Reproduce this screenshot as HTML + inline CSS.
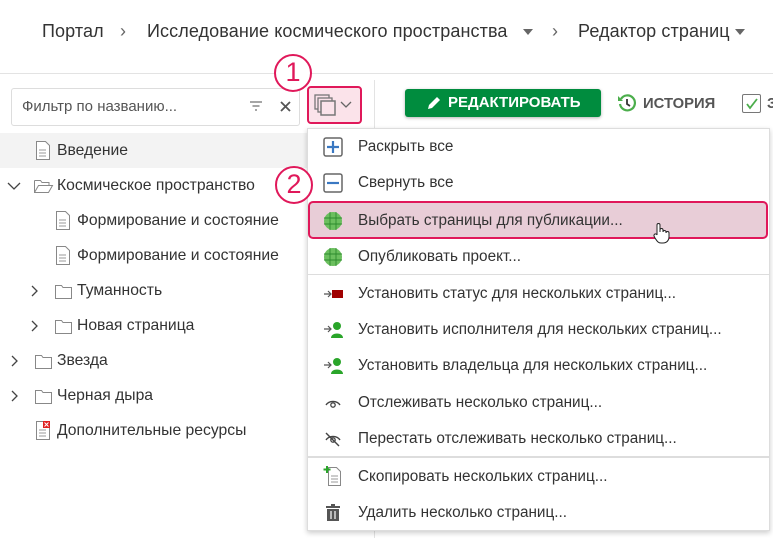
<!DOCTYPE html>
<html><head><meta charset="utf-8"><style>
*{margin:0;padding:0;box-sizing:border-box}
body{width:773px;height:538px;background:#fff;font-family:"Liberation Sans",sans-serif;color:#333;position:relative;overflow:hidden}
.a{position:absolute}
.bc{top:21px;font-size:18px;color:#333;letter-spacing:0.1px;white-space:nowrap}
.tri{display:inline-block;width:0;height:0;border-left:5px solid transparent;border-right:5px solid transparent;border-top:6px solid #666;vertical-align:middle}
.row{position:absolute;left:0;width:307px;height:35px;font-size:15.7px;line-height:35px;white-space:nowrap}
.mi{position:absolute;left:308px;width:461px;height:36px;font-size:15.3px;line-height:37px;color:#333;white-space:nowrap}
.mi span{position:absolute;left:50px}
.mi svg{position:absolute;left:15px;top:9px}
.circ{position:absolute;width:38px;height:38px;border:2.5px solid #e0185a;border-radius:50%;background:#fff;color:#e0185a;font-size:27px;line-height:33px;text-align:center}
</style></head><body>
<div class="a bc" style="left:42px">Портал</div>
<div class="a bc" style="left:120px;color:#666">›</div>
<div class="a bc" style="left:147px">Исследование космического пространства <span class="tri" style="margin-left:10px"></span></div>
<div class="a bc" style="left:552px;color:#666">›</div>
<div class="a bc" style="left:578px">Редактор страниц <span class="tri"></span></div>
<div class="a" style="left:0;top:73px;width:773px;height:1px;background:#e3e3e3"></div>
<div class="a" style="left:374px;top:80px;width:1px;height:458px;background:#e3e3e3"></div>

<div class="a" style="left:11px;top:88px;width:289px;height:38px;border:1px solid #ddd;border-radius:3px"></div>
<div class="a" style="left:22px;top:98px;font-size:15px;color:#555">Фильтр по названию...</div>
<svg class="a" style="left:249px;top:100px" width="14" height="12"><path d="M1 2h12M3.5 6h7M6 10h2" stroke="#888" stroke-width="1.6"/></svg>
<svg class="a" style="left:280px;top:101px" width="11" height="11"><path d="M1 1l9 9M10 1l-9 9" stroke="#555" stroke-width="1.8"/></svg>

<div class="a" style="left:307px;top:86px;width:55px;height:38px;background:#fbe3ea;border:2px solid #e0185a;border-radius:4px"></div>
<svg class="a" style="left:314px;top:94px" width="24" height="24"><rect x="1" y="1" width="14" height="14" fill="#fbe3ea" stroke="#777" stroke-width="1.3"/><rect x="4" y="4" width="14" height="14" fill="#fbe3ea" stroke="#777" stroke-width="1.3"/><rect x="7" y="7" width="14" height="14" fill="#fbe3ea" stroke="#777" stroke-width="1.5"/></svg>
<svg class="a" style="left:340px;top:101px" width="12" height="8"><path d="M1 1l5 5 5-5" stroke="#666" stroke-width="1.3" fill="none"/></svg>

<div class="a" style="left:405px;top:89px;width:196px;height:28px;background:#008c3e;border-radius:3px;box-shadow:0 1px 3px rgba(0,0,0,.3);color:#fff;font-weight:bold;font-size:15px;line-height:28px;padding-left:43px">РЕДАКТИРОВАТЬ</div>
<svg class="a" style="left:425px;top:94px" width="18" height="18"><path d="M3 15l1-4 8-8 3 3-8 8z" fill="#fff"/></svg>
<svg class="a" style="left:617px;top:93px" width="20" height="20"><path d="M4 6a7.5 7.5 0 1 1-1 5" stroke="#4cae4c" stroke-width="2.2" fill="none"/><path d="M1 3v5h5z" fill="#4cae4c"/><path d="M10 6v5l3 2" stroke="#333" stroke-width="1.8" fill="none"/></svg>
<div class="a" style="left:643px;top:96px;font-size:14.8px;font-weight:bold;color:#555">ИСТОРИЯ</div>
<div class="a" style="left:742px;top:94px;width:19px;height:19px;border:1.5px solid #777;border-radius:2px"></div>
<svg class="a" style="left:745px;top:97px" width="14" height="14"><path d="M2 7l3 4 7-9" stroke="#4cae4c" stroke-width="1.8" fill="none"/></svg>
<div class="a" style="left:767px;top:96px;font-size:14.8px;font-weight:bold;color:#555">З</div>

<div class="row" style="top:133px;background:#f3f3f3"></div>
<svg width="0" height="0" style="position:absolute"><defs>
<g id="doc"><path d="M1.5 .5h9l4 4v14h-13z" fill="#fff" stroke="#888"/><path d="M4 9h7M4 12h7M4 15h7" stroke="#999"/></g>
<g id="fol"><path d="M.5 3.5h6l1.5 2h8.5v11h-16z" fill="#fff" stroke="#888"/></g>
<g id="chr"><path d="M2 1l5 5-5 5" stroke="#444" stroke-width="1.3" fill="none"/></g>
</defs></svg>
<svg class="a" style="left:35px;top:141px" width="17" height="20"><use href="#doc"/></svg><div class="row" style="top:133px;left:57px;width:auto">Введение</div>
<svg class="a" style="left:7px;top:181px" width="14" height="10"><path d="M1 2l6 6 6-6" stroke="#444" stroke-width="1.3" fill="none"/></svg>
<svg class="a" style="left:34px;top:177px" width="20" height="18"><path d="M.5 3.5h6l1.5 2h7v3M.5 3.5v12h14l4-7h-14l-4 7" fill="#fff" stroke="#888"/></svg><div class="row" style="top:168px;left:57px;width:auto">Космическое пространство</div>
<svg class="a" style="left:55px;top:211px" width="17" height="20"><use href="#doc"/></svg><div class="row" style="top:203px;left:77px;width:auto">Формирование и состояние</div>
<svg class="a" style="left:55px;top:246px" width="17" height="20"><use href="#doc"/></svg><div class="row" style="top:238px;left:77px;width:auto">Формирование и состояние</div>
<svg class="a" style="left:30px;top:285px" width="10" height="12"><use href="#chr"/></svg><svg class="a" style="left:55px;top:282px" width="18" height="18"><use href="#fol"/></svg><div class="row" style="top:273px;left:77px;width:auto">Туманность</div>
<svg class="a" style="left:30px;top:320px" width="10" height="12"><use href="#chr"/></svg><svg class="a" style="left:55px;top:317px" width="18" height="18"><use href="#fol"/></svg><div class="row" style="top:308px;left:77px;width:auto">Новая страница</div>
<svg class="a" style="left:10px;top:355px" width="10" height="12"><use href="#chr"/></svg><svg class="a" style="left:35px;top:352px" width="18" height="18"><use href="#fol"/></svg><div class="row" style="top:343px;left:57px;width:auto">Звезда</div>
<svg class="a" style="left:10px;top:390px" width="10" height="12"><use href="#chr"/></svg><svg class="a" style="left:35px;top:387px" width="18" height="18"><use href="#fol"/></svg><div class="row" style="top:378px;left:57px;width:auto">Черная дыра</div>
<svg class="a" style="left:35px;top:421px" width="17" height="20"><use href="#doc"/><rect x="8" y="0" width="7" height="7" fill="#e02020"/><path d="M9.5 1.5l4 4M13.5 1.5l-4 4" stroke="#fff"/></svg><div class="row" style="top:413px;left:57px;width:auto">Дополнительные ресурсы</div>

<!-- menu -->
<div class="a" style="left:307px;top:128px;width:463px;height:403px;background:#fff;border:1px solid #ddd;box-shadow:0 2px 5px rgba(0,0,0,.2)"></div>
<div class="a" style="left:308px;top:274px;width:461px;height:1px;background:#ddd"></div>
<div class="a" style="left:308px;top:456px;width:461px;height:2px;background:#ddd"></div>
<div class="a" style="left:308px;top:201px;width:460px;height:38px;background:#e8cdd7;border:2px solid #e0185a;border-radius:5px"></div>

<div class="mi" style="top:128px"><svg width="20" height="20"><rect x="1" y="1" width="18" height="18" rx="2" fill="#fff" stroke="#666" stroke-width="1.5"/><path d="M10 4v12M4 10h12" stroke="#3a78c2" stroke-width="2.2"/></svg><span>Раскрыть все</span></div>
<div class="mi" style="top:164px"><svg width="20" height="20"><rect x="1" y="1" width="18" height="18" rx="2" fill="#fff" stroke="#666" stroke-width="1.5"/><path d="M4 10h12" stroke="#3a78c2" stroke-width="2.2"/></svg><span>Свернуть все</span></div>
<div class="mi" style="top:202px"><svg width="20" height="20"><circle cx="10" cy="10" r="9" fill="#6bbf5e"/><path d="M1 7h18M1 13h18M7 1v18M13 1v18" stroke="#2e8b2e" stroke-width=".9"/></svg><span>Выбрать страницы для публикации...</span></div>
<div class="mi" style="top:238px"><svg width="20" height="20"><circle cx="10" cy="10" r="9" fill="#6bbf5e"/><path d="M1 7h18M1 13h18M7 1v18M13 1v18" stroke="#2e8b2e" stroke-width=".9"/></svg><span>Опубликовать проект...</span></div>
<div class="mi" style="top:275px"><svg width="24" height="20"><path d="M1 10h6M5 7l3 3-3 3" stroke="#555" stroke-width="1.2" fill="none"/><rect x="9" y="6" width="11" height="8" fill="#a00000"/></svg><span>Установить статус для нескольких страниц...</span></div>
<div class="mi" style="top:311px"><svg width="24" height="20"><path d="M1 9h6M5 6l3 3-3 3" stroke="#555" stroke-width="1.2" fill="none"/><circle cx="14" cy="6" r="4" fill="#2aa52a"/><path d="M8 18c0-6 12-6 12 0z" fill="#2aa52a"/></svg><span>Установить исполнителя для нескольких страниц...</span></div>
<div class="mi" style="top:347px"><svg width="24" height="20"><path d="M1 9h6M5 6l3 3-3 3" stroke="#555" stroke-width="1.2" fill="none"/><circle cx="14" cy="6" r="4" fill="#2aa52a"/><path d="M8 18c0-6 12-6 12 0z" fill="#2aa52a"/></svg><span>Установить владельца для нескольких страниц...</span></div>
<div class="mi" style="top:384px"><svg width="20" height="20"><path d="M3 12a8 7 0 0 1 14 0" stroke="#444" stroke-width="1.4" fill="none"/><circle cx="10" cy="12" r="2.2" stroke="#444" stroke-width="1.3" fill="none"/></svg><span>Отслеживать несколько страниц...</span></div>
<div class="mi" style="top:420px"><svg width="20" height="20"><path d="M3 11a8 7 0 0 1 14 0" stroke="#444" stroke-width="1.4" fill="none"/><circle cx="10" cy="11" r="2.2" stroke="#444" stroke-width="1.3" fill="none"/><path d="M3 4l13 13" stroke="#444" stroke-width="1.4"/></svg><span>Перестать отслеживать несколько страниц...</span></div>
<div class="mi" style="top:458px"><svg width="20" height="22" style="top:7px"><path d="M5.5 2.5h8l4 4v14h-12z" fill="#fff" stroke="#888"/><path d="M8 11h7M8 14h7M8 17h7" stroke="#999"/><path d="M4 1v7M0.5 4.5h7" stroke="#2aa52a" stroke-width="2"/></svg><span>Скопировать нескольких страниц...</span></div>
<div class="mi" style="top:494px"><svg width="20" height="20"><path d="M3 4h14M8 2h4" stroke="#555" stroke-width="2"/><path d="M4 6h12v12H4z" fill="#555"/><path d="M8 8v8M12 8v8" stroke="#fff" stroke-width="1.2"/></svg><span>Удалить несколько страниц...</span></div>

<svg class="a" style="left:652px;top:222px" width="18" height="22"><path d="M5 12V3a1.5 1.5 0 0 1 3 0v7V8a1.5 1.5 0 0 1 3 0v2a1.5 1.5 0 0 1 3 0v1a1.5 1.5 0 0 1 3 0v4c0 3-2 6-6 6h-2c-3 0-4-2-6-5l-1-2a1.5 1.5 0 0 1 3-1z" fill="#fff" stroke="#222" stroke-width="1"/></svg>

<div class="circ" style="left:274px;top:54px">1</div>
<div class="circ" style="left:275px;top:166px">2</div>
</body></html>
